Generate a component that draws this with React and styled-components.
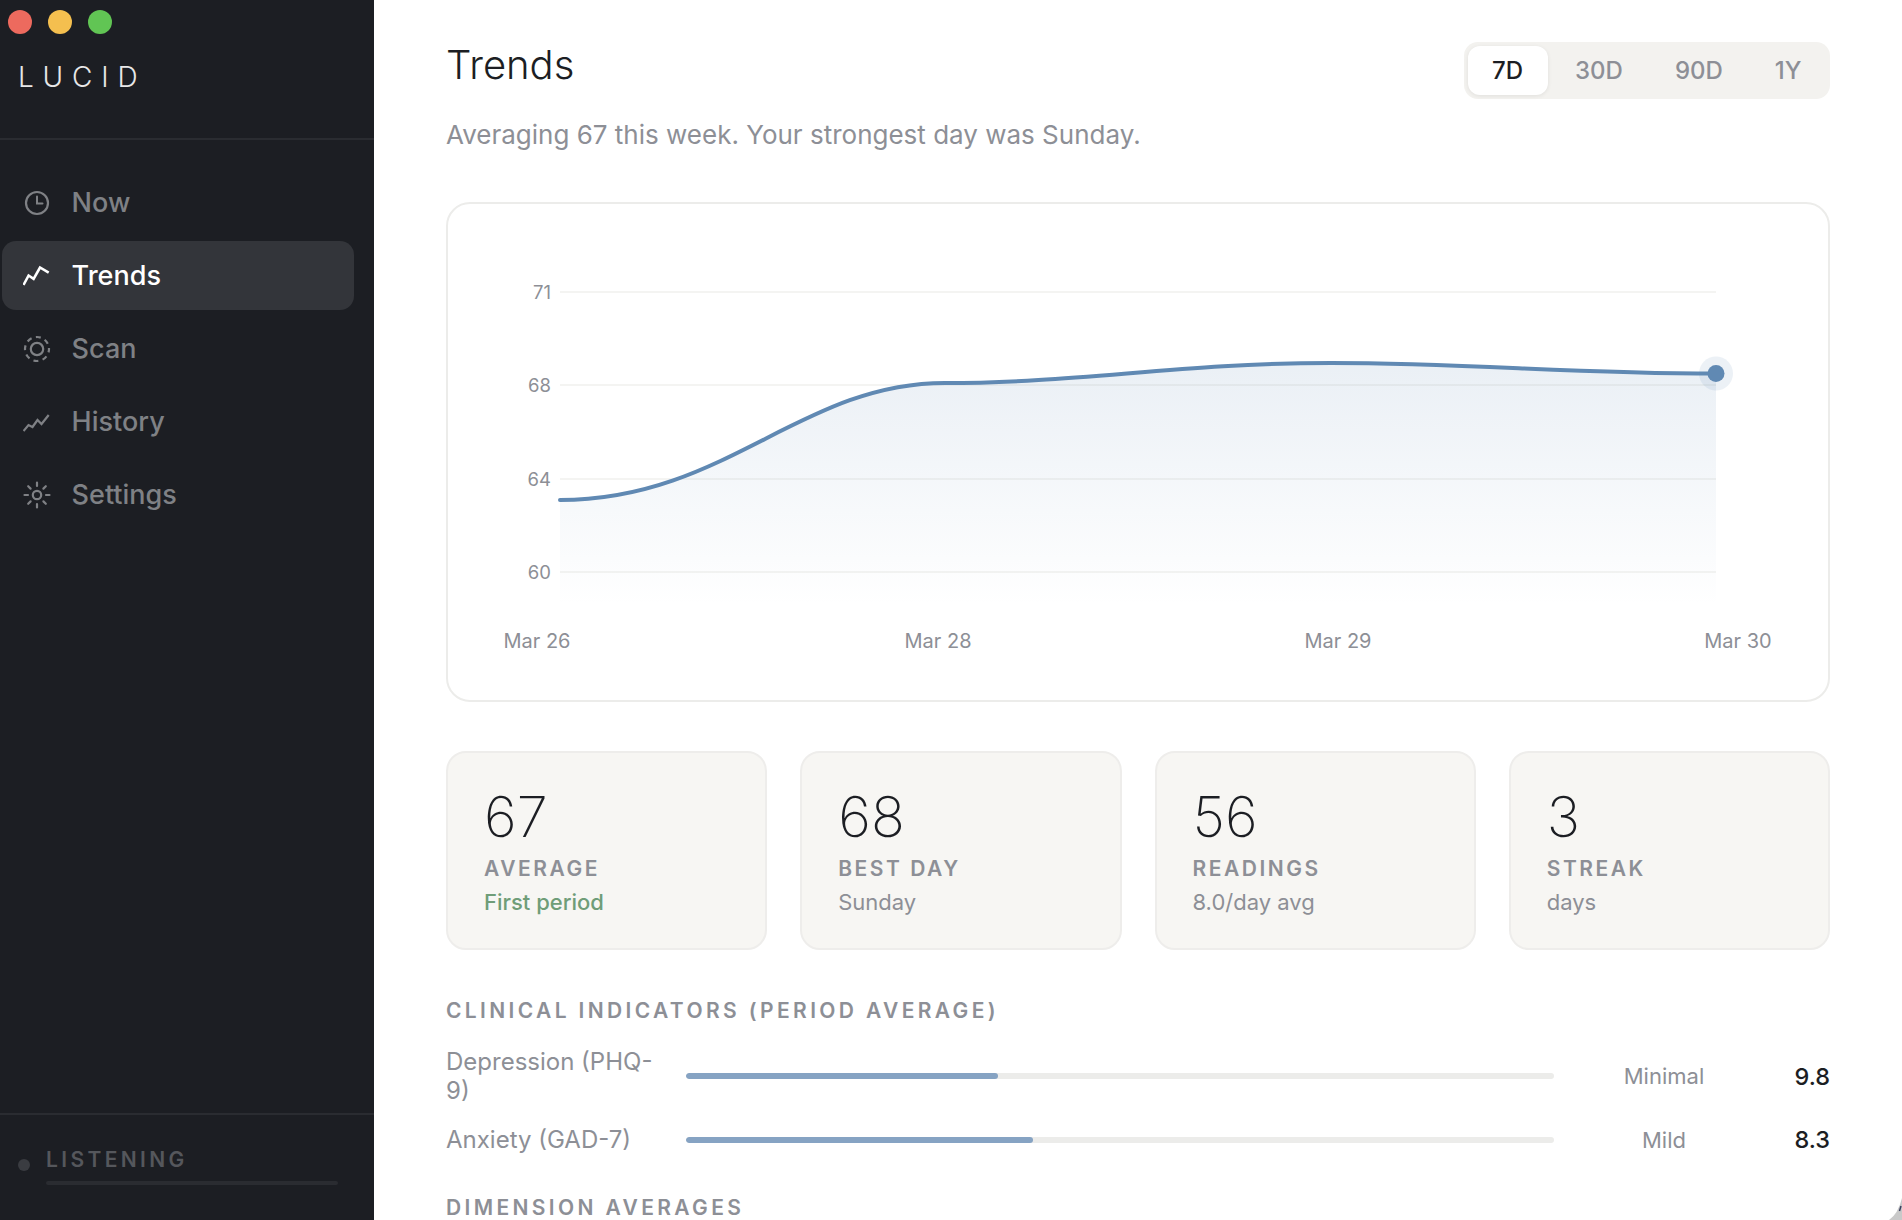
import React from 'react';
import styled, { createGlobalStyle } from 'styled-components';

const GlobalStyle = createGlobalStyle`
  html, body {
    margin: 0;
    padding: 0;
    height: 100%;
    overflow: hidden;
    background: #fff;
  }
  body {
    font-family: Inter, "Liberation Sans", sans-serif;
    -webkit-font-smoothing: antialiased;
  }
  * { box-sizing: border-box; }
`;

const Shell = styled.div`
  position: relative;
  width: 1902px;
  height: 1220px;
  display: flex;
  overflow: hidden;
`;

const WindowCorner = styled.svg`
  position: absolute;
  right: 0;
  bottom: 0;
  width: 13px;
  height: 22px;
`;

const Sidebar = styled.aside`
  width: 374px;
  flex-shrink: 0;
  height: 100%;
  background: #1c1e23;
  display: flex;
  flex-direction: column;
`;

const Brand = styled.div`
  height: 140px;
  flex-shrink: 0;
  border-bottom: 2px solid #2a2c31;
  padding: 10px 0 0 18px;
`;

const TrafficLights = styled.div`
  display: flex;
  gap: 16px;
  margin-left: -10px;
`;

const Light = styled.span`
  width: 24px;
  height: 24px;
  border-radius: 50%;
  background: ${(p) => p.$color};
`;

const Logo = styled.div`
  margin-top: 26px;
  font-size: 28px;
  line-height: 34px;
  font-weight: 300;
  letter-spacing: 0.315em;
  color: #e8e8e8;
`;

const Nav = styled.nav`
  flex: 1;
  padding: 28px 20px 0 2px;
  display: flex;
  flex-direction: column;
  gap: 4px;
`;

const NavItem = styled.a`
  height: 69px;
  display: flex;
  align-items: center;
  gap: 20.6px;
  padding-left: 21px;
  border-radius: 14px;
  font-size: 27px;
  font-weight: 500;
  color: ${(p) => (p.$active ? '#fff' : '#7f8185')};
  background: ${(p) => (p.$active ? '#33353a' : 'transparent')};

  svg {
    width: 28px;
    height: 28px;
    flex-shrink: 0;
  }
`;

const Footer = styled.div`
  height: 107px;
  flex-shrink: 0;
  border-top: 2px solid #2a2c31;
  padding: 31px 36px 0 18px;
  display: flex;
  gap: 16px;
`;

const StatusDot = styled.span`
  width: 12px;
  height: 12px;
  margin-top: 13px;
  border-radius: 50%;
  background: #3a3c41;
  flex-shrink: 0;
`;

const Status = styled.div`
  flex: 1;
`;

const StatusLabel = styled.div`
  font-size: 21px;
  line-height: 28px;
  font-weight: 600;
  letter-spacing: 0.16em;
  color: #55575c;
`;

const StatusBar = styled.div`
  height: 4px;
  margin-top: 7px;
  border-radius: 2px;
  background: #2a2c31;
`;

const Main = styled.main`
  flex: 1;
  min-width: 0;
  height: 100%;
  overflow: hidden;
  background: #fff;
  padding: 42px 72px 0 72px;
`;

const Header = styled.header`
  display: flex;
  justify-content: space-between;
  align-items: flex-start;
`;

const Title = styled.h1`
  margin: 1px 0 0;
  font-size: 40px;
  line-height: 44px;
  font-weight: 300;
  color: #1c1e23;
`;

const Subtitle = styled.p`
  margin: 32px 0 0;
  font-size: 26px;
  line-height: 32px;
  color: #8d8f96;
`;

const Segments = styled.div`
  display: flex;
  gap: 3px;
  height: 57px;
  padding: 4px;
  border-radius: 14px;
  background: #f3f2ef;
`;

const Segment = styled.button`
  border: 0;
  padding: 0 24.5px;
  font-family: inherit;
  font-size: 24px;
  font-weight: 500;
  border-radius: 12px;
  color: ${(p) => (p.$active ? '#1c1e23' : '#8d8f96')};
  background: ${(p) => (p.$active ? '#fff' : 'transparent')};
  box-shadow: ${(p) => (p.$active ? '0 1px 4px rgba(0,0,0,0.08)' : 'none')};
`;

const ChartCard = styled.section`
  margin-top: 51px;
  height: 500px;
  border: 2px solid #ececea;
  border-radius: 24px;
  background: #fff;

  svg {
    display: block;
    margin: -2px;
  }
`;

const AxisText = styled.text`
  font-family: Inter, sans-serif;
  font-size: ${(p) => p.$size}px;
  fill: #8d8f96;
`;

const Stats = styled.section`
  margin-top: 49px;
  display: grid;
  grid-template-columns: repeat(4, 1fr);
  gap: 33px;
`;

const StatCard = styled.div`
  height: 199px;
  padding: 33px 36px 0;
  border: 2px solid #eeedeb;
  border-radius: 20px;
  background: #f7f6f3;
`;

const StatValue = styled.div`
  font-size: 56px;
  line-height: 62px;
  font-weight: 200;
  color: #1c1e23;
`;

const StatLabel = styled.div`
  margin-top: 8px;
  font-size: 21px;
  line-height: 26px;
  font-weight: 600;
  letter-spacing: 0.12em;
  color: #8d8f96;
`;

const StatNote = styled.div`
  margin-top: 6px;
  font-size: 22px;
  line-height: 28px;
  font-weight: ${(p) => (p.$green ? 500 : 400)};
  color: ${(p) => (p.$green ? '#6f9d78' : '#8d8f96')};
`;

const SectionTitle = styled.h2`
  margin: ${(p) => p.$top}px 0 0;
  font-size: 21px;
  line-height: 26px;
  font-weight: 600;
  letter-spacing: 0.16em;
  color: #8d8f96;
`;

const Indicators = styled.div`
  margin-top: 23px;
  display: flex;
  flex-direction: column;
  gap: 20px;
`;

const Indicator = styled.div`
  display: grid;
  grid-template-columns: 216px 1fr 172px 56px;
  gap: 24px;
  align-items: center;
`;

const IndicatorName = styled.div`
  font-size: 24px;
  line-height: 29px;
  color: #8d8f96;
`;

const Track = styled.div`
  height: 6px;
  border-radius: 3px;
  background: #ececea;
  overflow: hidden;
`;

const Fill = styled.div`
  height: 100%;
  border-radius: 3px;
  background: #86a3c3;
`;

const Severity = styled.div`
  text-align: center;
  font-size: 22px;
  color: #8d8f96;
`;

const Score = styled.div`
  text-align: right;
  font-size: 23.5px;
  font-weight: 500;
  color: #1c1e23;
`;

const ClockIcon = () => (
  <svg viewBox="0 0 28 28" fill="none" stroke="currentColor" strokeWidth="2.2" strokeLinecap="round">
    <circle cx="14" cy="14" r="11" />
    <path d="M14 7.5V14.5H19.5" strokeWidth="2" />
  </svg>
);

const TrendIcon = () => (
  <svg viewBox="0 0 28 28" fill="none" stroke="currentColor" strokeWidth="2.6">
    <path d="M.5 23 5.6 13.5 10.6 16.8 17 5.5 25.7 10.7" />
  </svg>
);

const ScanIcon = () => (
  <svg viewBox="0 0 28 28" fill="none" stroke="currentColor" strokeWidth="2.2">
    <circle cx="14" cy="14" r="6.2" />
    <circle cx="14" cy="14" r="12" strokeDasharray="5 4.42" strokeDashoffset="1.5" />
  </svg>
);

const HistoryIcon = () => (
  <svg viewBox="0 0 28 28" fill="none" stroke="currentColor" strokeWidth="2.2">
    <path d="M.5 23 5.5 17 9.5 19 14.5 12 18.5 16 25.7 7" />
  </svg>
);

const GearIcon = () => (
  <svg viewBox="0 0 28 28" fill="none" stroke="currentColor" strokeWidth="2.2" strokeLinecap="round">
    <circle cx="14" cy="14" r="4.2" />
    <path d="M14 1.5V5M14 23V26.5M1.5 14H5M23 14H26.5M5.2 5.2 7.6 7.6M20.4 20.4 22.8 22.8M5.2 22.8 7.6 20.4M20.4 7.6 22.8 5.2" />
  </svg>
);

// chart coordinates are page px minus the card origin (446, 202)
const px = (x) => x - 446;
const py = (y) => y - 202;
const gridYs = [
  { label: '71', y: 292 },
  { label: '68', y: 385 },
  { label: '64', y: 479 },
  { label: '60', y: 572 },
];
const dates = [
  { label: 'Mar 26', x: 537 },
  { label: 'Mar 28', x: 938 },
  { label: 'Mar 29', x: 1338 },
  { label: 'Mar 30', x: 1738 },
];
const line = [
  `M${px(560)} ${py(500)}`,
  `C${px(725)} ${py(500)} ${px(800)} ${py(383)} ${px(945)} ${py(383)}`,
  `C${px(1080)} ${py(383)} ${px(1180)} ${py(363)} ${px(1331)} ${py(363)}`,
  `C${px(1470)} ${py(363)} ${px(1570)} ${py(373.5)} ${px(1716)} ${py(373.5)}`,
].join(' ');
const area = `${line} L${px(1716)} ${py(606)} L${px(560)} ${py(606)} Z`;

const TrendChart = () => (
  <svg width="1384" height="500" viewBox="0 0 1384 500">
    <defs>
      <linearGradient id="trendFill" x1="0" y1="0" x2="0" y2="1">
        <stop offset="0" stopColor="#6089b3" stopOpacity="0.13" />
        <stop offset="1" stopColor="#6089b3" stopOpacity="0" />
      </linearGradient>
    </defs>
    {gridYs.map((g) => (
      <g key={g.label}>
        <line x1={px(560)} x2={px(1716)} y1={py(g.y)} y2={py(g.y)} stroke="#f0f0ee" strokeWidth="1.5" />
        <AxisText $size={18.5} x={px(551)} y={py(g.y)} textAnchor="end" dominantBaseline="central">
          {g.label}
        </AxisText>
      </g>
    ))}
    <path d={area} fill="url(#trendFill)" />
    <path d={line} fill="none" stroke="#6089b3" strokeWidth="4" strokeLinecap="round" />
    <circle cx={px(1716)} cy={py(373.5)} r="17" fill="#6089b3" fillOpacity="0.12" />
    <circle cx={px(1716)} cy={py(373.5)} r="8.5" fill="#6089b3" />
    {dates.map((d) => (
      <AxisText key={d.label} $size={20} x={px(d.x)} y={py(640.5)} textAnchor="middle" dominantBaseline="central">
        {d.label}
      </AxisText>
    ))}
  </svg>
);

const navItems = [
  { label: 'Now', Icon: ClockIcon },
  { label: 'Trends', Icon: TrendIcon, active: true },
  { label: 'Scan', Icon: ScanIcon },
  { label: 'History', Icon: HistoryIcon },
  { label: 'Settings', Icon: GearIcon },
];

const stats = [
  { value: '67', label: 'AVERAGE', note: 'First period', green: true },
  { value: '68', label: 'BEST DAY', note: 'Sunday' },
  { value: '56', label: 'READINGS', note: '8.0/day avg' },
  { value: '3', label: 'STREAK', note: 'days' },
];

const indicators = [
  { name: 'Depression (PHQ-9)', pct: 35.9, severity: 'Minimal', score: '9.8' },
  { name: 'Anxiety (GAD-7)', pct: 40, severity: 'Mild', score: '8.3' },
];

const App = () => (
  <>
    <GlobalStyle />
    <Shell>
      <Sidebar>
        <Brand>
          <TrafficLights>
            <Light $color="#ed6a5e" />
            <Light $color="#f4bf4f" />
            <Light $color="#61c554" />
          </TrafficLights>
          <Logo>LUCID</Logo>
        </Brand>
        <Nav>
          {navItems.map(({ label, Icon, active }) => (
            <NavItem key={label} $active={active}>
              <Icon />
              {label}
            </NavItem>
          ))}
        </Nav>
        <Footer>
          <StatusDot />
          <Status>
            <StatusLabel>LISTENING</StatusLabel>
            <StatusBar />
          </Status>
        </Footer>
      </Sidebar>
      <Main>
        <Header>
          <div>
            <Title>Trends</Title>
            <Subtitle>Averaging 67 this week. Your strongest day was Sunday.</Subtitle>
          </div>
          <Segments>
            <Segment $active>7D</Segment>
            <Segment>30D</Segment>
            <Segment>90D</Segment>
            <Segment>1Y</Segment>
          </Segments>
        </Header>
        <ChartCard>
          <TrendChart />
        </ChartCard>
        <Stats>
          {stats.map((s) => (
            <StatCard key={s.label}>
              <StatValue>{s.value}</StatValue>
              <StatLabel>{s.label}</StatLabel>
              <StatNote $green={s.green}>{s.note}</StatNote>
            </StatCard>
          ))}
        </Stats>
        <SectionTitle $top={48}>CLINICAL INDICATORS (PERIOD AVERAGE)</SectionTitle>
        <Indicators>
          {indicators.map((i) => (
            <Indicator key={i.name}>
              <IndicatorName>{i.name}</IndicatorName>
              <Track>
                <Fill style={{ width: `${i.pct}%` }} />
              </Track>
              <Severity>{i.severity}</Severity>
              <Score>{i.score}</Score>
            </Indicator>
          ))}
        </Indicators>
        <SectionTitle $top={41}>DIMENSION AVERAGES</SectionTitle>
      </Main>
      <WindowCorner viewBox="0 0 13 22">
        <path d="M0 22Q9 16 13 0V22Z" fill="#c9c9c9" />
        <path d="M10.5 13 12 8" stroke="#3a4060" strokeWidth="1.5" fill="none" />
      </WindowCorner>
    </Shell>
  </>
);

export default App;
